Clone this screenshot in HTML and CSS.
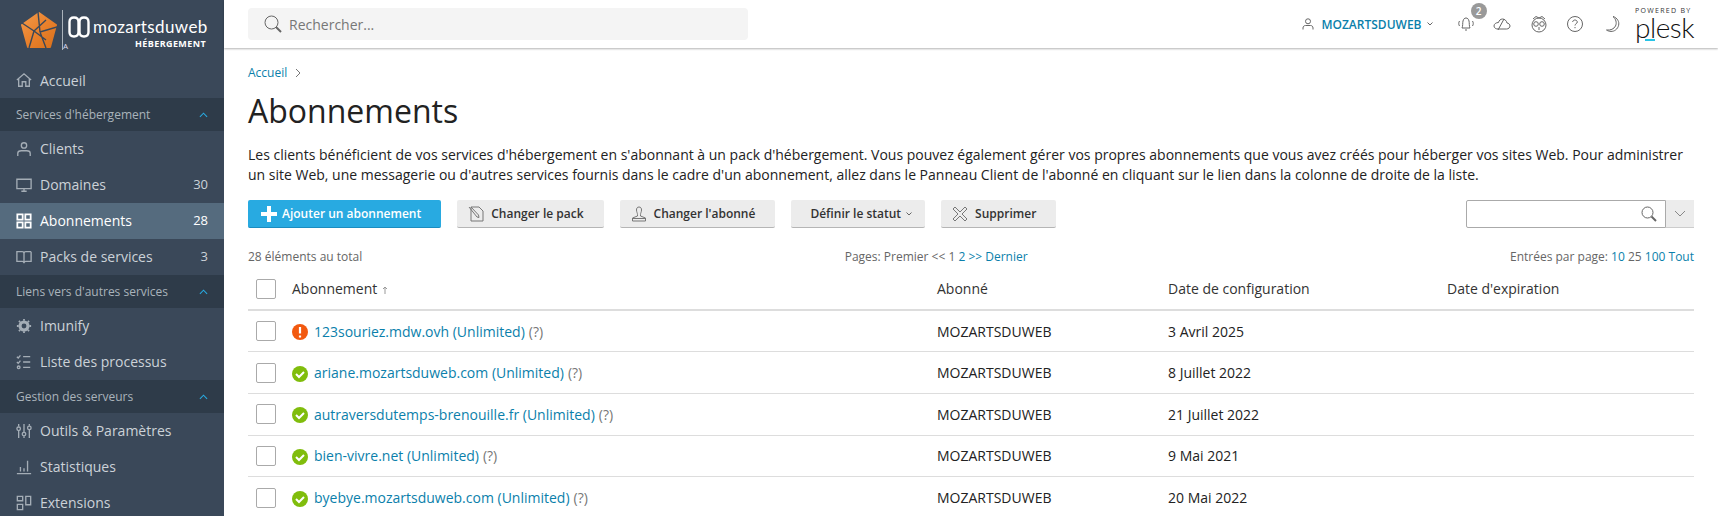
FILE: index.html
```html
<!DOCTYPE html>
<html lang="fr">
<head>
<meta charset="utf-8">
<title>Abonnements</title>
<link rel="stylesheet" href="styles.css">
</head>
<body>
<svg class="defs" width="0" height="0" aria-hidden="true">
  <defs>
    <linearGradient id="org" x1="0" y1="0" x2="1" y2="1"><stop offset="0" stop-color="#f39a4a"/><stop offset=".5" stop-color="#e9812c"/><stop offset="1" stop-color="#d9701c"/></linearGradient>
  </defs>
</svg>
<div class="app">
  <aside class="side">
    <div class="logo">
      <svg class="pent" width="36" height="36" viewBox="0 0 36 36">
        <path d="M18 1 L35 13 L29 35 L7 35 L1 13 Z" fill="url(#org)" stroke="url(#org)" stroke-width="2" stroke-linejoin="round"/>
        <path d="M19 20 L17 0 M19 20 L36 15 M19 20 L25 36 M13 19 L8 36 M13 19 L25 8 M13 19 L25 28 M13 19 L1 11" stroke="#3a4859" stroke-width="1.400" fill="none"/>
      </svg>
      <span class="logo-rule"><span class="logo-a">A</span></span>
      <div class="logo-text">
        <div class="logo-top">
          <svg class="logo-mark" width="22" height="22" viewBox="0 0 22 22"><path d="M6 1.500 C3 1.500 1.500 3 1.500 6 V16 C1.500 19 3 20.500 6 20.500 C9 20.500 10.500 19 10.500 16 V6 C10.500 3 9 1.500 6 1.500 M16 1.500 C13 1.500 11.500 3 11.500 6 V16 C11.500 19 13 20.500 16 20.500 C19 20.500 20.500 19 20.500 16 V6 C20.500 3 19 1.500 16 1.500"/></svg>
          <span class="logo-name">mozartsduweb</span>
        </div>
        <div class="logo-sub">HÉBERGEMENT</div>
      </div>
    </div>
    <nav>
      <a class="item first"><svg class="ic" viewBox="0 0 18 18"><path d="M1 9 L9 2 L17 9 M3 8 V16 H7 V11 H11 V16 H15 V8"/></svg><span class="lbl">Accueil</span></a>
      <div class="sect"><span>Services d'hébergement</span><svg class="chev" viewBox="0 0 10 6"><path d="M1 5 L5 1 L9 5"/></svg></div>
      <a class="item"><svg class="ic" viewBox="0 0 18 18"><circle cx="9" cy="5" r="3"/><path d="M2 17 V14 C2 12 4 11 6 11 H12 C14 11 16 12 16 14 V17"/></svg><span class="lbl">Clients</span></a>
      <a class="item"><svg class="ic" viewBox="0 0 18 18"><path d="M1 2.500 H17 V13 H1 Z M6 16 H12 M9 13 V16"/></svg><span class="lbl">Domaines</span><span class="count">30</span></a>
      <a class="item on"><svg class="ic" viewBox="0 0 18 18"><path d="M1.500 1.500 H7.500 V7.500 H1.500 Z M10.500 1.500 H16.500 V7.500 H10.500 Z M1.500 10.500 H7.500 V16.500 H1.500 Z M10.500 10.500 H16.500 V16.500 H10.500 Z"/></svg><span class="lbl">Abonnements</span><span class="count">28</span></a>
      <a class="item"><svg class="ic" viewBox="0 0 18 18"><path d="M1 3 H7 C8 3 9 4 9 5 V16 C9 15 8 14 7 14 H1 Z M17 3 H11 C10 3 9 4 9 5 M17 3 V14 H11 C10 14 9 15 9 16"/></svg><span class="lbl">Packs de services</span><span class="count">3</span></a>
      <div class="sect"><span>Liens vers d'autres services</span><svg class="chev" viewBox="0 0 10 6"><path d="M1 5 L5 1 L9 5"/></svg></div>
      <a class="item"><svg class="ic" viewBox="0 0 18 18"><circle cx="9" cy="9" r="4.500" stroke-width="3.500"/><path d="M9 1 V3 M9 15 V17 M1 9 H3 M15 9 H17 M3.300 3.300 L4.700 4.700 M13.300 13.300 L14.700 14.700 M3.300 14.700 L4.700 13.300 M13.300 4.700 L14.700 3.300" stroke-width="2"/></svg><span class="lbl">Imunify</span></a>
      <a class="item"><svg class="ic" viewBox="0 0 18 18"><path d="M8 3 H16 M8 9 H16 M8 15 H16 M1 3 L2.500 4.500 L5 1.500 M1 9 L2.500 10.500 L5 7.500"/><circle cx="3" cy="15" r="1.500"/></svg><span class="lbl">Liste des processus</span></a>
      <div class="sect"><span>Gestion des serveurs</span><svg class="chev" viewBox="0 0 10 6"><path d="M1 5 L5 1 L9 5"/></svg></div>
      <a class="item"><svg class="ic" viewBox="0 0 18 18"><path d="M3 1 V4 M3 9 V17 M9 1 V10 M9 15 V17 M15 1 V3 M15 8 V17"/><circle cx="3" cy="6.500" r="2"/><circle cx="9" cy="12.500" r="2"/><circle cx="15" cy="5.500" r="2"/></svg><span class="lbl">Outils &amp; Paramètres</span></a>
      <a class="item"><svg class="ic" viewBox="0 0 18 18"><path d="M1 16.500 H17 M5 14 V9 M9 14 V10.500 M13 14 V2"/></svg><span class="lbl">Statistiques</span></a>
      <a class="item"><svg class="ic" viewBox="0 0 18 18"><path d="M1.500 1.500 H7.500 V6.500 H1.500 Z M1.500 10.500 H7.500 V16.500 H1.500 Z M11 1.500 H16.500 V11 H11 Z"/></svg><span class="lbl">Extensions</span></a>
    </nav>
  </aside>
  <div class="main">
    <header class="top">
      <div class="search">
        <svg class="search-ic" width="18" height="18" viewBox="0 0 18 18"><circle cx="7.500" cy="7.500" r="6.500"/><path d="M12 12 L17 17" stroke-width="2"/></svg>
        <span>Rechercher...</span>
      </div>
      <div class="tools">
        <div class="user">
          <svg class="tool-ic small" viewBox="0 0 12 12"><circle cx="6" cy="3.300" r="2.500"/><path d="M1 11.500 V10 C1 8.500 2 7.500 3.500 7.500 H8.500 C10 7.500 11 8.500 11 10 V11.500"/></svg>
          <b>MOZARTSDUWEB</b>
          <svg class="caret" width="6" height="4" viewBox="0 0 6 4"><path d="M.5 .5 L3 3 L5.500 .5"/></svg>
        </div>
        <div class="bell">
          <svg class="tool-ic" viewBox="0 0 18 18"><path d="M5 13 C6 11 5.500 8 6 6 C6.500 4 7.500 3 9 3 C10.500 3 11.500 4 12 6 C12.500 8 12 11 13 13 Z M8 15 H10 M2.500 6 C1.500 7.500 1.500 9.500 2.500 11 M15.500 6 C16.500 7.500 16.500 9.500 15.500 11"/></svg>
          <span class="badge">2</span>
        </div>
        <svg class="tool-ic" viewBox="0 0 18 18"><path d="M5 14 H13.500 C15.500 14 17 12.500 17 11 C17 9.500 15.500 8 14 8 C13.500 5.500 11.500 4 9.500 4 C7.500 4 6 5.500 5.500 7.500 C3 7.500 1 9 1 11 C1 13 3 14 5 14 M5 15 L11 4"/></svg>
        <svg class="tool-ic" viewBox="0 0 18 18"><circle cx="9" cy="10" r="7"/><circle cx="6" cy="9" r="2.300"/><circle cx="12" cy="9" r="2.300"/><path d="M3 4 L6 1.500 L9 3 L12 1.500 L15 4 M9 12 V15"/></svg>
        <svg class="tool-ic" viewBox="0 0 18 18"><circle cx="9" cy="9" r="7.500"/><path d="M6.700 7 C6.700 5.500 8 5 9 5 C10.300 5 11.300 6 11.300 7 C11.300 8.700 9 8.700 9 10.500 M9 12 V13.200"/></svg>
        <svg class="tool-ic" viewBox="0 0 18 18"><path d="M10 1.500 C13 4 14 8 12.500 11 C11 14 7.500 15.500 3.500 15 C6 16.800 10 17 12.500 15 C16 12.500 16.500 8 15 5.500 C14 3.500 12 2 10 1.500 Z"/></svg>
        <div class="plesk">
          <span class="plesk-by">POWERED BY</span>
          <span class="plesk-name">plesk</span>
        </div>
      </div>
    </header>
    <main class="content">
      <div class="crumb"><a>Accueil</a><svg width="6" height="10" viewBox="0 0 6 10"><path d="M1 1 L5 5 L1 9"/></svg></div>
      <h1>Abonnements</h1>
      <p class="intro">Les clients bénéficient de vos services d'hébergement en s'abonnant à un pack d'hébergement. Vous pouvez également gérer vos propres abonnements que vous avez créés pour héberger vos sites Web. Pour administrer un site Web, une messagerie ou d'autres services fournis dans le cadre d'un abonnement, allez dans le Panneau Client de l'abonné en cliquant sur le lien dans la colonne de droite de la liste.</p>
      <div class="toolbar">
        <button class="btn primary"><svg width="16" height="16" viewBox="0 0 16 16"><path d="M6 0 H10 V6 H16 V10 H10 V16 H6 V10 H0 V6 H6 Z" fill="#fff"/></svg>Ajouter un abonnement</button>
        <button class="btn"><svg class="btn-ic" width="16" height="16" viewBox="0 0 16 16"><path d="M3 1 H11 L15 5 V15 H3 Z M1 1 L9 11 L11 11.500 L10.500 9 L3 1"/></svg>Changer le pack</button>
        <button class="btn"><svg class="btn-ic" width="16" height="16" viewBox="0 0 16 16"><path d="M8 1 C6 1 5.500 2.500 5.500 4 C5.500 6 6.500 7 6.500 8.500 V10 L1.500 12 V15 H14.500 V12 L9.500 10 V8.500 C9.500 7 10.500 6 10.500 4 C10.500 2.500 10 1 8 1 Z M1.500 12.500 H14.500"/></svg>Changer l'abonné</button>
        <button class="btn status">Définir le statut<svg class="caret" width="6" height="4" viewBox="0 0 6 4"><path d="M.5 .5 L3 3 L5.500 .5"/></svg></button>
        <button class="btn"><svg class="btn-ic" width="16" height="16" viewBox="0 0 16 16"><path d="M1 3 L3 1 L8 6 L13 1 L15 3 L10 8 L15 13 L13 15 L8 10 L3 15 L1 13 L6 8 Z"/></svg>Supprimer</button>
        <div class="filter">
          <div class="filter-input"><svg width="16" height="16" viewBox="0 0 16 16"><circle cx="6.500" cy="6.500" r="5.500"/><path d="M10.500 10.500 L15 15" stroke-width="2"/></svg></div>
          <div class="filter-drop"><svg width="12" height="7" viewBox="0 0 12 7"><path d="M1 1 L6 6 L11 1"/></svg></div>
        </div>
      </div>
      <div class="pager">
        <span>28 éléments au total</span>
        <span class="pages">Pages: Premier &lt;&lt; 1 <a>2</a> <a>&gt;&gt;</a> <a>Dernier</a></span>
        <span class="per">Entrées par page: <a>10</a> 25 <a>100</a> <a>Tout</a></span>
      </div>
      <table class="list">
        <colgroup><col class="c1"><col class="c2"><col class="c3"><col class="c4"><col></colgroup>
        <thead>
          <tr><th><span class="box"></span></th><th>Abonnement <svg class="sort" width="6" height="8" viewBox="0 0 6 8"><path d="M3 8 V1 M1 3 L3 1 L5 3"/></svg></th><th>Abonné</th><th>Date de configuration</th><th>Date d'expiration</th></tr>
        </thead>
        <tbody>
          <tr><td><span class="box"></span></td><td><div class="name"><svg class="st" width="16" height="16" viewBox="0 0 16 16"><circle cx="8" cy="8" r="8" fill="#f2590f"/><path d="M8 3 V9.500 M8 11.500 V13.500" stroke="#fff" stroke-width="2.200"/></svg><a>123souriez.mdw.ovh (Unlimited)</a><i>(?)</i></div></td><td>MOZARTSDUWEB</td><td>3 Avril 2025</td><td></td></tr>
          <tr><td><span class="box"></span></td><td><div class="name"><svg class="st" width="16" height="16" viewBox="0 0 16 16"><circle cx="8" cy="8" r="8" fill="#80bd0c"/><path d="M4 8 L7 11 L12 6" stroke="#fff" stroke-width="2" fill="none"/></svg><a>ariane.mozartsduweb.com (Unlimited)</a><i>(?)</i></div></td><td>MOZARTSDUWEB</td><td>8 Juillet 2022</td><td></td></tr>
          <tr><td><span class="box"></span></td><td><div class="name"><svg class="st" width="16" height="16" viewBox="0 0 16 16"><circle cx="8" cy="8" r="8" fill="#80bd0c"/><path d="M4 8 L7 11 L12 6" stroke="#fff" stroke-width="2" fill="none"/></svg><a>autraversdutemps-brenouille.fr (Unlimited)</a><i>(?)</i></div></td><td>MOZARTSDUWEB</td><td>21 Juillet 2022</td><td></td></tr>
          <tr><td><span class="box"></span></td><td><div class="name"><svg class="st" width="16" height="16" viewBox="0 0 16 16"><circle cx="8" cy="8" r="8" fill="#80bd0c"/><path d="M4 8 L7 11 L12 6" stroke="#fff" stroke-width="2" fill="none"/></svg><a>bien-vivre.net (Unlimited)</a><i>(?)</i></div></td><td>MOZARTSDUWEB</td><td>9 Mai 2021</td><td></td></tr>
          <tr><td><span class="box"></span></td><td><div class="name"><svg class="st" width="16" height="16" viewBox="0 0 16 16"><circle cx="8" cy="8" r="8" fill="#80bd0c"/><path d="M4 8 L7 11 L12 6" stroke="#fff" stroke-width="2" fill="none"/></svg><a>byebye.mozartsduweb.com (Unlimited)</a><i>(?)</i></div></td><td>MOZARTSDUWEB</td><td>20 Mai 2022</td><td></td></tr>
        </tbody>
      </table>
    </main>
  </div>
</div>
</body>
</html>
```
FILE: styles.css
```css
* { box-sizing: border-box; }
html, body { margin: 0; height: 516px; overflow: hidden; }
body { font-family: "Open Sans", sans-serif; font-size: 14px; color: #222; background: #fff; }
.defs { position: absolute; }
.app { display: flex; height: 516px; }

/* sidebar */
.side { width: 224px; flex: none; background: #3a4859; overflow: hidden; color: #ccd2d8; }
.logo { height: 62px; display: flex; align-items: flex-start; padding: 12px 0 0 21px; }
.pent { flex: none; }
.logo-rule { width: 1px; height: 40px; margin: -2px 0 0 5px; background: #aab2ba; position: relative; flex: none; }
.logo-a { position: absolute; left: 1px; bottom: -1px; font-size: 8px; line-height: 10px; color: #dde; }
.logo-text { margin: 4px 0 0 5px; color: #fff; width: 139px; }
.logo-top { display: flex; align-items: center; height: 22px; }
.logo-mark { fill: none; stroke: #fff; stroke-width: 2.400; flex: none; }
.logo-name { font-family: "Lato", sans-serif; font-size: 17px; line-height: 22px; letter-spacing: .4px; margin-left: 3px; font-weight: 400; }
.logo-sub { text-align: right; font-size: 9px; font-weight: 700; letter-spacing: .4px; line-height: 11px; margin-top: 0; padding-right: 1px; }

.item { display: flex; align-items: center; height: 36px; padding: 0 16px 2px; font-size: 14px; }
.item.first { padding-bottom: 0; }
.item.on { background: #556b7e; color: #fff; }
.ic { width: 16px; height: 16px; flex: none; margin-right: 8px; fill: none; stroke: #a4adb6; stroke-width: 1.500; position: relative; top: 1px; }
.first .ic { top: 0; }
.on .ic { stroke: #fff; stroke-width: 2; }
.lbl { flex: 1; }
.count { font-size: 13px; }
.sect { display: flex; align-items: center; justify-content: space-between; height: 33px; padding: 0 16px; background: #2e3b49; font-size: 12px; color: #aab3bb; }
.chev { width: 9px; height: 6px; fill: none; stroke: #28aae1; stroke-width: 1.200; }

/* top bar */
.main { flex: 1; min-width: 0; display: flex; flex-direction: column; }
.top { height: 48px; flex: none; display: flex; align-items: center; justify-content: space-between; padding: 0 23px 0 24px; box-shadow: 0 1px 2px rgba(0,0,0,.3); position: relative; }
.search { width: 500px; height: 32px; background: #f4f4f4; border-radius: 4px; display: flex; align-items: center; padding-left: 16px; color: #777; font-size: 14px; }
.search-ic { margin-right: 7px; fill: none; stroke: #666; }
.tools { display: flex; align-items: center; }
.tool-ic { width: 18px; height: 18px; fill: none; stroke: #666; stroke-width: 1; margin-left: 18.500px; }
.tool-ic.small { width: 12px; height: 12px; margin: 0 7px 0 0; }
.user { display: flex; align-items: center; font-size: 12px; color: #0b7fab; margin-right: 24px; }
.user b { font-weight: 600; }
.caret { margin-left: 5px; fill: none; stroke: #666; }
.bell { position: relative; display: flex; }
.bell .tool-ic { margin-left: 0; }
.badge { position: absolute; left: 14px; top: -12px; width: 16px; height: 16px; border-radius: 50%; background: #999; color: #fff; font-size: 10px; font-weight: 600; line-height: 16px; text-align: center; }
.plesk { margin-left: 14.500px; display: flex; flex-direction: column; width: 60px; margin-top: -2px; }
.plesk-by { font-size: 7px; letter-spacing: 1.300px; color: #333; line-height: 8px; white-space: nowrap; }
.plesk-name { font-family: "Lato", sans-serif; font-weight: 300; font-size: 28px; line-height: 24px; letter-spacing: -.5px; color: #111; position: relative; }
.plesk-name::after { content: ""; position: absolute; left: 10px; top: 24px; width: 10px; height: 2px; background: #28c3e6; }

/* content */
.content { flex: 1; padding: 16px 24px 0; overflow: hidden; min-height: 0; }
.crumb { display: flex; align-items: center; font-size: 12px; line-height: 18px; }
.crumb a, .list a, .pager a { color: #0b7fab; }
.crumb svg { margin-left: 8px; fill: none; stroke: #777; }
h1 { font-size: 32px; font-weight: 400; line-height: 44px; margin: 7px 0 0; color: #222; }
.intro { margin: 12px 0 0; line-height: 20px; font-size: 14px; }
.toolbar { display: flex; margin-top: 15px; height: 30px; }
.btn { height: 28px; border: 0; border-bottom: 1px solid #b5b5b5; border-radius: 2px; background: #ececec; font: 600 12px "Open Sans", sans-serif; color: #333; margin: 0 16px 0 0; padding: 0 20px 0 11px; display: flex; align-items: center; gap: 7px; }
.btn.primary { background: #28aae1; border-bottom-color: #1a8cc0; color: #fff; padding: 0 20px 0 13px; gap: 5px; }
.btn.status { padding: 0 13px 0 19px; gap: 0; }
.btn-ic { fill: none; stroke: #777; }
.filter { margin-left: auto; display: flex; height: 28px; }
.filter-input { width: 200px; border: 1px solid #aaa; border-radius: 2px 0 0 2px; background: #fff; display: flex; align-items: center; justify-content: flex-end; padding-right: 8px; }
.filter-input svg { fill: none; stroke: #666; }
.filter-drop { width: 28px; background: #ececec; border-bottom: 1px solid #ccc; display: flex; align-items: center; justify-content: center; }
.filter-drop svg { fill: none; stroke: #888; }
.pager { display: flex; justify-content: space-between; margin-top: 18px; font-size: 12px; line-height: 18px; color: #666; }

/* table */
.list { width: 100%; border-collapse: collapse; table-layout: fixed; margin-top: 2px; }
.c1 { width: 36px; }
.c2 { width: 645px; }
.c3 { width: 231px; }
.c4 { width: 279px; }
.list th { font-weight: 400; text-align: left; height: 42px; padding: 0 8px; border-bottom: 2px solid #ddd; color: #333; }
.list td { height: 41.700px; padding: 0 8px; border-bottom: 1px solid #ddd; color: #222; }
.box { display: block; width: 20px; height: 20px; border: 1px solid #aaa; border-radius: 2px; background: #fff; }
.sort { margin-left: 1px; fill: none; stroke: #999; }
.name { display: flex; align-items: center; white-space: pre; }
.st { flex: none; margin: 2px 6px 0 0; }
.name i { font-style: normal; color: #777; margin-left: 4px; }
```
